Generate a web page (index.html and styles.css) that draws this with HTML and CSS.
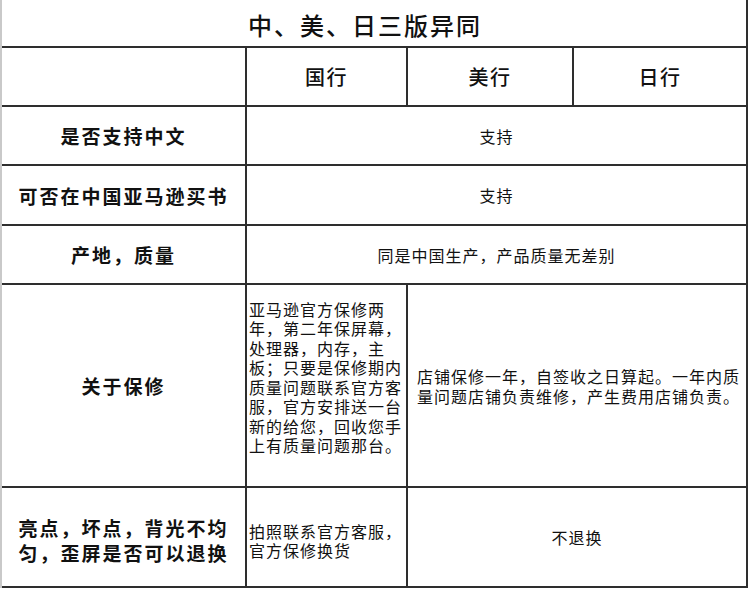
FILE: index.html
```html
<!DOCTYPE html>
<html lang="zh-CN">
<head>
<meta charset="utf-8">
<title>中、美、日三版异同</title>
<link rel="stylesheet" href="styles.css">
</head>
<body>
<div class="sheet">
  <div class="cell title span-all">中、美、日三版异同</div>

  <div class="cell"></div>
  <div class="cell head">国行</div>
  <div class="cell head">美行</div>
  <div class="cell head">日行</div>

  <div class="cell label">是否支持中文</div>
  <div class="cell data span-rest">支持</div>

  <div class="cell label">可否在中国亚马逊买书</div>
  <div class="cell data span-rest">支持</div>

  <div class="cell label">产地，质量</div>
  <div class="cell data span-rest">同是中国生产，产品质量无差别</div>

  <div class="cell label">关于保修</div>
  <div class="cell data left narrow warranty">亚马逊官方保修两年，第二年保屏幕，处理器，内存，主板；只要是保修期内质量问题联系官方客服，官方安排送一台新的给您，回收您手上有质量问题那台。</div>
  <div class="cell data left wide span-last">店铺保修一年，自签收之日算起。一年内质量问题店铺负责维修，产生费用店铺负责。</div>

  <div class="cell label two-line"><span>亮点，坏点，背光不均<br>匀，歪屏是否可以退换</span></div>
  <div class="cell data left narrow exchange">拍照联系官方客服，官方保修换货</div>
  <div class="cell data span-last">不退换</div>
</div>
</body>
</html>
```

FILE: styles.css
```css
html, body {
  margin: 0;
  padding: 0;
  background: #ffffff;
}

body {
  font-family: "Noto Sans CJK SC", "Noto Sans", sans-serif;
  color: #111111;
}

.sheet {
  display: grid;
  grid-template-columns: 245px 161px 166px 174px;
  grid-template-rows: 48px 59px 59px 60px 59px 203px 100px;
  width: max-content;
  border-left: 2px solid #c9c9c9;
}

.cell {
  box-sizing: border-box;
  display: flex;
  align-items: center;
  justify-content: center;
  border-right: 2px solid #2e2e2e;
  border-bottom: 2px solid #2e2e2e;
  min-width: 0;
}

.span-all {
  grid-column: 1 / -1;
}

.span-rest {
  grid-column: 2 / -1;
}

.span-last {
  grid-column: 3 / -1;
}

.title {
  font-size: 24px;
  font-weight: 500;
  letter-spacing: 2px;
  padding-top: 3px;
  padding-right: 18px;
}

.head {
  font-size: 20px;
  font-weight: 500;
  letter-spacing: 1.5px;
}

.label {
  font-size: 19px;
  font-weight: 700;
  letter-spacing: 2px;
  text-align: center;
}

.two-line {
  line-height: 25px;
  padding-top: 5px;
}

.data {
  font-size: 16px;
  letter-spacing: 1px;
  line-height: 20px;
}

.left {
  justify-content: flex-start;
  text-align: left;
}

.narrow {
  padding: 0 1px 0 2px;
}

.warranty {
  line-height: 19.5px;
  padding-bottom: 16px;
}

.exchange {
  line-height: 19px;
  padding-top: 8px;
}

.wide {
  padding: 0 4px 0 9px;
}
```
